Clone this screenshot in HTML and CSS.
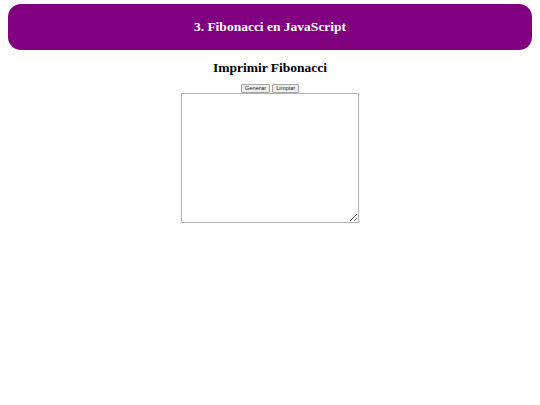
FILE: index.html
```html
<!DOCTYPE html>
<html lang="es">
<head>
<meta charset="utf-8">
<title>Fibonacci en JavaScript</title>
<link rel="stylesheet" href="styles.css">
</head>
<body>
<header class="banner">
  <h1 class="banner-title">3. Fibonacci en JavaScript</h1>
</header>
<main class="content">
  <h2 class="section-title">Imprimir Fibonacci</h2>
  <div class="actions">
    <button class="btn" type="button">Generar</button>
    <button class="btn" type="button">Limpiar</button>
  </div>
  <textarea class="output"></textarea>
</main>
</body>
</html>
```
FILE: styles.css
```css
html, body {
  margin: 0;
  padding: 0;
  background: #ffffff;
}
body {
  font-family: "Liberation Serif", "Times New Roman", serif;
}
.banner {
  margin: 4px 8px 0 8px;
  height: 46px;
  background: #800080;
  border-radius: 13px;
  display: flex;
  align-items: center;
  justify-content: center;
}
.banner-title {
  margin: 0;
  color: #ffffff;
  font-size: 13.5px;
  font-weight: bold;
  line-height: 16px;
}
.content {
  display: flex;
  flex-direction: column;
  align-items: center;
}
.section-title {
  margin: 10px 0 8px 0;
  font-size: 13.5px;
  font-weight: bold;
  line-height: 16px;
  color: #000000;
}
.actions {
  display: flex;
  gap: 2px;
  height: 9px;
  margin-bottom: 0;
}
.btn {
  font-family: "Liberation Sans", Arial, sans-serif;
  font-size: 5.8px;
  line-height: 7px;
  height: 9px;
  padding: 0 3px;
  margin: 0;
  border: 1px solid #a3a3a3;
  border-radius: 1px;
  background: #efefef;
  color: #222222;
}
.output {
  display: block;
  box-sizing: border-box;
  width: 178px;
  height: 130px;
  margin: 0;
  border: 1px solid #b4b4b4;
  padding: 1px;
  font-size: 7.5px;
}
```
